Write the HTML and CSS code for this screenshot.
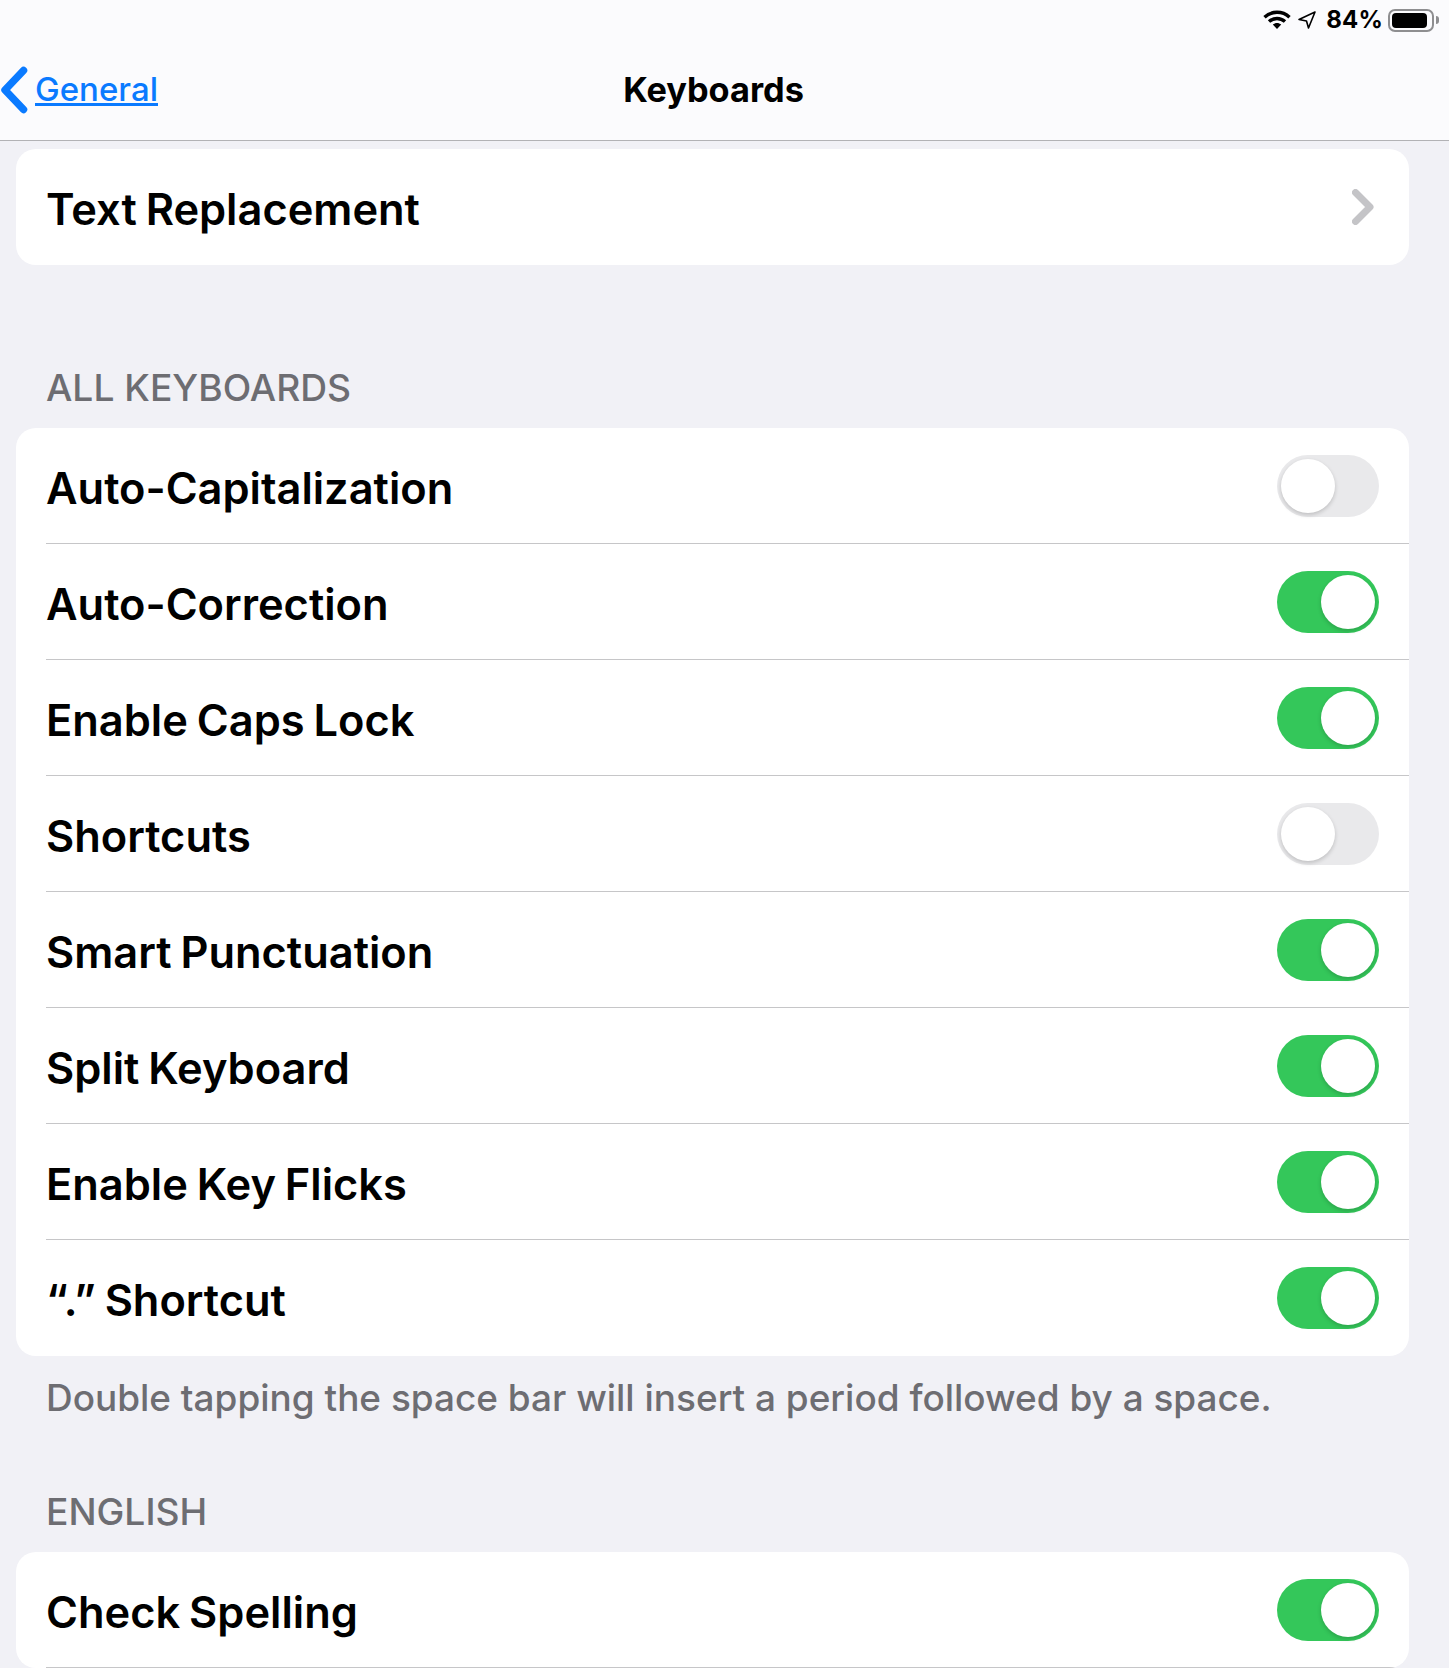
FILE: index.html
```html
<!DOCTYPE html>
<html lang="en">
<head>
<meta charset="utf-8">
<title>Keyboards</title>
<link rel="stylesheet" href="styles.css">
</head>
<body>
<header class="topbar">
  <div class="status">
    <svg class="wifi" width="28" height="20" viewBox="0 0 28 20"><path d="M1.500 7.200C8.500.6 19.500.6 26.500 7.200M6 11.600c4.600-4.200 11.400-4.200 16 0" fill="none" stroke="#000" stroke-width="3.400"/><path d="M9.800 14.600c2.500-2.200 5.900-2.200 8.400 0L14 19z" fill="#000"/></svg>
    <svg class="loc" width="20" height="20" viewBox="0 0 20 20"><path d="M18 2 2 9.500l7.500 1.500L11.500 18z" fill="none" stroke="#000" stroke-width="1.600" stroke-linejoin="round"/></svg>
    <span class="pct">84%</span>
    <span class="battery"><span class="battery-fill"></span></span>
    <span class="battery-tip"></span>
  </div>
  <nav class="nav">
    <a class="back" href="#">
      <svg class="chev" width="28" height="48" viewBox="0 0 28 48"><path d="M23.500 4.500 5 24l18.500 19.500" fill="none" stroke="#0a7aff" stroke-width="7.500" stroke-linecap="round" stroke-linejoin="round"/></svg>
      <span class="back-label">General</span>
    </a>
    <h1 class="title">Keyboards</h1>
  </nav>
</header>
<main class="content">
  <section class="card">
    <div class="row">
      <span class="label">Text Replacement</span>
      <svg class="disc" width="22" height="36" viewBox="0 0 22 36"><path d="M3.500 3.500 18 18 3.500 32.500" fill="none" stroke="#c4c4c7" stroke-width="7" stroke-linecap="round" stroke-linejoin="round"/></svg>
    </div>
  </section>
  <h2 class="sect sect-all">ALL KEYBOARDS</h2>
  <section class="card">
    <div class="row"><span class="label">Auto-Capitalization</span><span class="tog"></span></div>
    <div class="row"><span class="label">Auto-Correction</span><span class="tog on"></span></div>
    <div class="row"><span class="label">Enable Caps Lock</span><span class="tog on"></span></div>
    <div class="row"><span class="label">Shortcuts</span><span class="tog"></span></div>
    <div class="row"><span class="label">Smart Punctuation</span><span class="tog on"></span></div>
    <div class="row"><span class="label">Split Keyboard</span><span class="tog on"></span></div>
    <div class="row"><span class="label">Enable Key Flicks</span><span class="tog on"></span></div>
    <div class="row"><span class="label">“.” Shortcut</span><span class="tog on"></span></div>
  </section>
  <p class="foot">Double tapping the space bar will insert a period followed by a space.</p>
  <h2 class="sect sect-en">ENGLISH</h2>
  <section class="card">
    <div class="row row-sep"><span class="label">Check Spelling</span><span class="tog on"></span></div>
  </section>
</main>
</body>
</html>
```
FILE: styles.css
```css
* { box-sizing: border-box; }
html, body { margin: 0; height: 1668px; overflow: hidden; }
body { background: #f1f1f6; font-family: Inter, "Liberation Sans", sans-serif; color: #000; }
.topbar { height: 141px; background: #fbfbfd; border-bottom: 1px solid #b2b2b5; display: flex; flex-direction: column; }
.status { height: 40px; display: flex; align-items: center; justify-content: flex-end; padding-right: 10px; }
.wifi { margin-right: 6px; }
.loc { margin-right: 9px; }
.pct { font-size: 24px; font-weight: 700; letter-spacing: 0.2px; margin-right: 5px; position: relative; top: -1px; }
.battery { width: 46px; height: 23px; border: 2px solid #8e8e90; border-radius: 7px; padding: 2px; display: flex; }
.battery-fill { width: 35px; background: #000; border-radius: 4px; }
.battery-tip { width: 3px; height: 8px; background: #8e8e90; border-radius: 0 3px 3px 0; margin-left: 2px; }
.nav { flex: 1; display: grid; grid-template-columns: 1fr auto 1fr; align-items: center; padding-right: 24px; }
.back { justify-self: start; display: flex; align-items: center; color: #0a7aff; }
.chev { display: block; margin-right: 7px; }
.back-label { font-size: 33px; font-weight: 500; text-decoration: underline; text-decoration-thickness: 3px; position: relative; top: -1px; }
.title { margin: 0; font-size: 34.300px; font-weight: 700; position: relative; top: -1px; left: 1px; }
.content { padding: 8px 40px 0 16px; display: flex; flex-direction: column; }
.card { background: #fff; border-radius: 20px; padding-left: 30px; overflow: hidden; }
.row { height: 116px; display: flex; align-items: center; justify-content: space-between; padding-right: 30px; border-bottom: 1px solid #c6c6c8; }
.row:last-child { border-bottom: 0; }
.row.row-sep { border-bottom: 1px solid #c6c6c8; }
.label { font-size: 43.400px; font-weight: 560; word-spacing: -2px; padding-top: 4px; }
.disc { margin-right: 5px; }
.tog { width: 102px; height: 62px; border-radius: 31px; background: #e9e9eb; position: relative; display: block; }
.tog::after { content: ""; position: absolute; left: 4px; top: 4px; width: 54px; height: 54px; border-radius: 50%; background: #fff; box-shadow: 0 2px 4px rgba(0,0,0,.18); }
.tog.on { background: #34c75a; }
.tog.on::after { left: 44px; }
.sect { margin: 0; font-size: 37.200px; font-weight: 500; color: #6d6d72; padding-left: 30px; }
.sect-all { margin-top: 100px; margin-bottom: 18px; }
.foot { margin: 19px 0 0; font-size: 36.950px; font-weight: 500; color: #6d6d72; padding-left: 30px; }
.sect-en { margin-top: 69px; margin-bottom: 18px; }
```
